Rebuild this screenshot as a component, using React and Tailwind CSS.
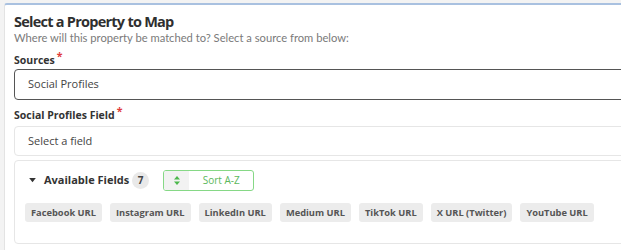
export default function App() {
  const fields = ["Facebook URL", "Instagram URL", "LinkedIn URL", "Medium URL", "TikTok URL", "X URL (Twitter)", "YouTube URL"];
  return (
    <div className="w-[621px] h-[250px] overflow-hidden bg-[#f3f3f3] pt-[3px] pl-[4px] font-['Open_Sans',sans-serif]">
      <div className="w-[680px] h-[260px] bg-white border-t-2 border-t-[#a9c1e0] border-l border-l-[#e3e3e3] rounded-tl-[3px] pl-[9px] pt-[7px]">
        <h1 className="text-[14.5px] leading-[20px] font-bold text-[#2f2f2f] tracking-[-0.75px]">Select a Property to Map</h1>
        <p className="text-[11.2px] leading-[12px] text-[#7a7a7a] font-['Lato',sans-serif]">
          Where will this property be matched to? Select a source from below:
        </p>

        <div className="mt-[9px] text-[10.5px] leading-[14px] font-bold text-[#333]">
          Sources<span className="text-[#e03a3a] relative -top-[4px] ml-[2px]">*</span>
        </div>
        <div className="mt-[2px] h-[31px] border-[1.5px] border-[#555] rounded-[4px] flex items-center pl-[13px] text-[11px] text-[#444]">
          Social Profiles
        </div>

        <div className="mt-[8px] text-[10.5px] leading-[14px] font-bold text-[#333]">
          Social Profiles Field<span className="text-[#e03a3a] relative -top-[4px] ml-[2px]">*</span>
        </div>
        <div className="mt-[4px] h-[30px] border border-[#e6e6e6] rounded-[4px] flex items-center pl-[13px] text-[11px] text-[#444]">
          Select a field
        </div>

        <div className="mt-[4px] h-[84px] border border-[#e6e6e6] rounded-[4px] pl-[10px] pt-[9px]">
          <div className="flex items-center h-[21px]">
            <svg width="7" height="5" viewBox="0 0 8 6" className="ml-[4px]">
              <path d="M0 0 L8 0 L4 5 Z" fill="#333" />
            </svg>
            <span className="ml-[8px] text-[11px] font-bold text-[#333]">Available Fields</span>
            <span className="ml-[3px] w-[17px] h-[17px] rounded-full bg-[#e9e9e9] flex items-center justify-center text-[10px] font-bold text-[#444]">7</span>
            <div className="ml-[14px] w-[91px] h-[21px] border border-[#86d886] rounded-[3px] flex overflow-hidden">
              <div className="w-[25px] bg-[#f2f2f2] flex items-center justify-center">
                <svg width="6" height="9" viewBox="0 0 6 9">
                  <path d="M0 3.6 L3 0 L6 3.6 Z" fill="#4cb84c" />
                  <path d="M0 5.4 L3 9 L6 5.4 Z" fill="#4cb84c" />
                </svg>
              </div>
              <div className="flex-1 flex items-center justify-center text-[10px] text-[#5cb85c]">Sort A-Z</div>
            </div>
          </div>
          <div className="mt-[12px] flex gap-[8px]">
            {fields.map((f) => (
              <span key={f} className="h-[19px] px-[6px] rounded-[3px] bg-[#ececec] flex items-center text-[9.3px] font-bold text-[#555]">
                {f}
              </span>
            ))}
          </div>
        </div>
      </div>
    </div>
  );
}
